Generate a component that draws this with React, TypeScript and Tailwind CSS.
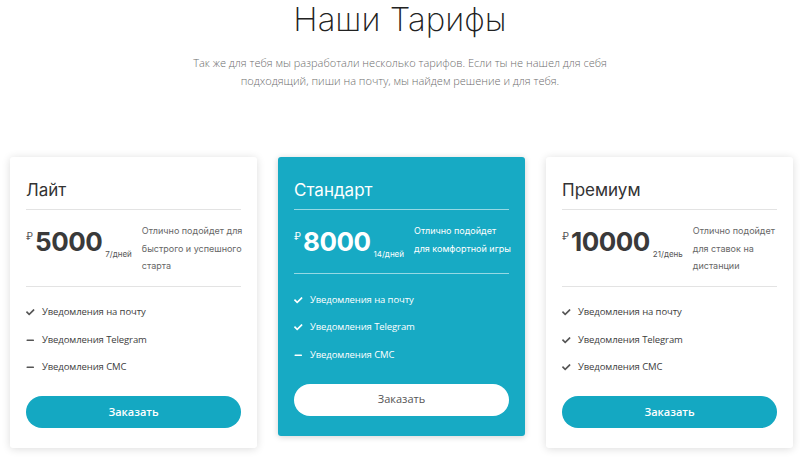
import React from "react";
import { FaCheck, FaMinus } from "react-icons/fa";

type Feature = { text: string; on: boolean };
type Plan = {
  name: string;
  price: string;
  per: string;
  desc: string[];
  features: Feature[];
  featured?: boolean;
};

const plans: Plan[] = [
  {
    name: "Лайт",
    price: "5000",
    per: "7/дней",
    desc: ["Отлично подойдет для", "быстрого и успешного", "старта"],
    features: [
      { text: "Уведомления на почту", on: true },
      { text: "Уведомления Telegram", on: false },
      { text: "Уведомления СМС", on: false },
    ],
  },
  {
    name: "Стандарт",
    price: "8000",
    per: "14/дней",
    desc: ["Отлично подойдет", "для комфортной игры"],
    features: [
      { text: "Уведомления на почту", on: true },
      { text: "Уведомления Telegram", on: true },
      { text: "Уведомления СМС", on: false },
    ],
    featured: true,
  },
  {
    name: "Премиум",
    price: "10000",
    per: "21/день",
    desc: ["Отлично подойдет", "для ставок на", "дистанции"],
    features: [
      { text: "Уведомления на почту", on: true },
      { text: "Уведомления Telegram", on: true },
      { text: "Уведомления СМС", on: true },
    ],
  },
];

const heading = "font-['Inter','Noto_Sans',sans-serif]";
const body = "font-['Open_Sans','Noto_Sans',sans-serif]";

function Card({ plan }: { plan: Plan }) {
  const f = !!plan.featured;
  return (
    <div
      className={`w-[247px] shrink-0 rounded-[3px] px-4 pt-[21px] pb-5 ${
        f
          ? "bg-[#17aac4] shadow-[0_1px_6px_rgba(0,0,0,0.18)]"
          : "bg-white shadow-[0_1px_8px_rgba(0,0,0,0.14)]"
      }`}
    >
      <div
        className={`${heading} h-[24px] text-[17px] leading-[24px] font-normal ${
          f ? "text-white" : "text-[#333]"
        }`}
      >
        {plan.name}
      </div>
      <div
        className={`mt-[7px] h-px ${f ? "bg-[rgba(255,255,255,0.55)]" : "bg-[#e3e3e3]"}`}
      />
      <div className="flex items-start pt-3 pb-[11px]">
        <div className="flex items-start h-[40px] shrink-0">
          <span
            className={`${heading} text-[10px] leading-[10px] mt-[9px] mr-[2px] ${
              f ? "text-white" : "text-[#555]"
            }`}
          >
            ₽
          </span>
          <span
            className={`${heading} text-[26px] leading-[40px] font-bold tracking-[-0.5px] ${
              f ? "text-white" : "text-[#3a3a3a]"
            }`}
          >
            {plan.price}
          </span>
          <span
            className={`${heading} self-end text-[8px] leading-[10px] mb-[3px] ml-[3px] ${
              f ? "text-white" : "text-[#555]"
            }`}
          >
            {plan.per}
          </span>
        </div>
        <div
          className={`${heading} ml-[10px] text-[9px] leading-[17.5px] whitespace-nowrap ${
            f ? "text-white" : "text-[#666]"
          }`}
        >
          {plan.desc.map((d, i) => (
            <div key={i}>{d}</div>
          ))}
        </div>
      </div>
      <div
        className={`h-px ${f ? "bg-[rgba(255,255,255,0.55)]" : "bg-[#e3e3e3]"}`}
      />
      <ul className="pt-3">
        {plan.features.map((ft, i) => (
          <li
            key={i}
            className={`${body} flex h-[27.5px] items-center text-[9.5px] font-medium tracking-[-0.1px] ${
              f ? "text-white" : "text-[#3d3d3d]"
            }`}
          >
            <span className="flex w-[16px] items-center">
              {ft.on ? (
                <FaCheck className={`text-[8.5px] ${f ? "text-white" : "text-[#555]"}`} />
              ) : (
                <FaMinus className={`text-[8.5px] ${f ? "text-white" : "text-[#555]"}`} />
              )}
            </span>
            <span>{ft.text}</span>
          </li>
        ))}
      </ul>
      <button
        className={`${body} mt-[15px] flex h-[32px] w-full items-center justify-center rounded-full text-[11px] ${
          f
            ? "bg-white text-[#555] font-normal"
            : "bg-[#14a8c2] text-white font-semibold"
        }`}
      >
        Заказать
      </button>
    </div>
  );
}

export default function App() {
  return (
    <div className="h-[457px] w-[800px] overflow-hidden bg-white">
      <h1
        className={`${heading} text-center text-[33px] leading-[38px] font-extralight text-[#222]`}
      >
        Наши Тарифы
      </h1>
      <p
        className={`${body} mt-[16px] text-center text-[11px] leading-[18px] font-light text-[#6e6e6e]`}
      >
        Так же для тебя мы разработали несколько тарифов. Если ты не нашел для себя
        <br />
        подходящий, пиши на почту, мы найдем решение и для тебя.
      </p>
      <div className="ml-[10px] mt-[67px] flex items-start gap-[21px]">
        {plans.map((p) => (
          <Card key={p.name} plan={p} />
        ))}
      </div>
    </div>
  );
}
